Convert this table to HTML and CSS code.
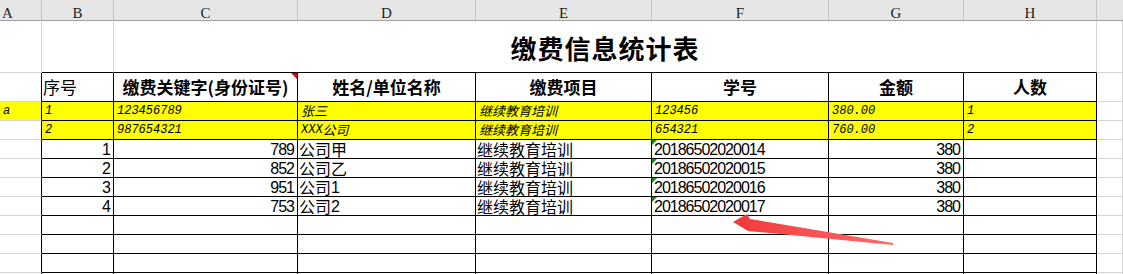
FILE: index.html
```html
<!DOCTYPE html>
<html lang="zh-CN">
<head>
<meta charset="utf-8">
<title>缴费信息统计表</title>
<link rel="stylesheet" href="styles.css">
</head>
<body>
<div class="sheet">
  <!-- column headers -->
  <div class="ch cha">A</div>
  <div class="ch">B</div>
  <div class="ch">C</div>
  <div class="ch">D</div>
  <div class="ch">E</div>
  <div class="ch">F</div>
  <div class="ch">G</div>
  <div class="ch">H</div>
  <div class="ch chi"></div>

  <!-- title row -->
  <div></div>
  <div class="kb"></div>
  <div class="title">缴费信息统计表</div>
  <div></div>

  <!-- header row -->
  <div class="edge"></div>
  <div class="t hd plain">序号</div>
  <div class="t hd ctr comment">缴费关键字(身份证号)</div>
  <div class="t hd ctr">姓名/单位名称</div>
  <div class="t hd ctr">缴费项目</div>
  <div class="t hd ctr">学号</div>
  <div class="t hd ctr">金额</div>
  <div class="t hd ctr">人数</div>
  <div></div>

  <!-- yellow rows -->
  <div class="edge ylw yt">a</div>
  <div class="t ylw yt">1</div>
  <div class="t ylw yt">123456789</div>
  <div class="t ylw yt"><span class="cj">张三</span></div>
  <div class="t ylw yt"><span class="cj">继续教育培训</span></div>
  <div class="t ylw yt">123456</div>
  <div class="t ylw yt">380.00</div>
  <div class="t ylw yt">1</div>
  <div></div>

  <div class="edge"></div>
  <div class="t ylw yt">2</div>
  <div class="t ylw yt">987654321</div>
  <div class="t ylw yt">XXX<span class="cj">公司</span></div>
  <div class="t ylw yt"><span class="cj">继续教育培训</span></div>
  <div class="t ylw yt">654321</div>
  <div class="t ylw yt">760.00</div>
  <div class="t ylw yt">2</div>
  <div></div>

  <!-- data rows -->
  <div class="edge"></div>
  <div class="t num r">1</div>
  <div class="t num r">789</div>
  <div class="t dt">公司甲</div>
  <div class="t dt">继续教育培训</div>
  <div class="t num txt">20186502020014</div>
  <div class="t num r">380</div>
  <div class="t"></div>
  <div></div>

  <div class="edge"></div>
  <div class="t num r">2</div>
  <div class="t num r">852</div>
  <div class="t dt">公司乙</div>
  <div class="t dt">继续教育培训</div>
  <div class="t num txt">20186502020015</div>
  <div class="t num r">380</div>
  <div class="t"></div>
  <div></div>

  <div class="edge"></div>
  <div class="t num r">3</div>
  <div class="t num r">951</div>
  <div class="t dt">公司<span class="dg">1</span></div>
  <div class="t dt">继续教育培训</div>
  <div class="t num txt">20186502020016</div>
  <div class="t num r">380</div>
  <div class="t"></div>
  <div></div>

  <div class="edge"></div>
  <div class="t num r">4</div>
  <div class="t num r">753</div>
  <div class="t dt">公司<span class="dg">2</span></div>
  <div class="t dt">继续教育培训</div>
  <div class="t num txt">20186502020017</div>
  <div class="t num r">380</div>
  <div class="t"></div>
  <div></div>

  <div class="edge"></div><div class="t"></div><div class="t"></div><div class="t"></div><div class="t"></div><div class="t"></div><div class="t"></div><div class="t"></div><div></div>
  <div class="edge"></div><div class="t"></div><div class="t"></div><div class="t"></div><div class="t"></div><div class="t"></div><div class="t"></div><div class="t"></div><div></div>
  <div class="edge"></div><div class="t"></div><div class="t"></div><div class="t"></div><div class="t"></div><div class="t"></div><div class="t"></div><div class="t"></div><div></div>
  <div class="edge"></div><div class="t"></div><div class="t"></div><div class="t"></div><div class="t"></div><div class="t"></div><div class="t"></div><div class="t"></div><div></div>
</div>

<svg class="arrow" width="1123" height="274" viewBox="0 0 1123 274" aria-hidden="true">
  <defs>
    <linearGradient id="ag" x1="733" y1="222" x2="893" y2="244" gradientUnits="userSpaceOnUse">
      <stop offset="0" stop-color="#f23a3a"/>
      <stop offset="1" stop-color="#ff6a6a"/>
    </linearGradient>
  </defs>
  <polygon points="733,222 747,214 750,219 893,243 893,245 748,231" fill="url(#ag)"/>
</svg>
</body>
</html>
```
FILE: styles.css
```css
html, body {
  margin: 0;
  padding: 0;
  background: #ffffff;
  overflow: hidden;
}

body {
  width: 1123px;
  height: 274px;
  position: relative;
  font-family: "Noto Sans CJK SC", "Liberation Sans", sans-serif;
  color: #000;
}

.sheet {
  display: grid;
  grid-template-columns: 42px 72px 184px 178px 176px 177px 135px 133px 26px;
  grid-template-rows: 21px 52px 29px;
  grid-auto-rows: 19px;
  height: 274px;
  overflow: hidden;
}

.sheet > div {
  box-sizing: border-box;
  border-right: 1px solid #d4d4d4;
  border-bottom: 1px solid #d4d4d4;
  overflow: hidden;
  white-space: nowrap;
  display: flex;
  align-items: center;
  position: relative;
  line-height: 18px;
}

/* column header strip */
.sheet > .ch {
  background: #e6e6e6;
  border-right-color: #c6c6c6;
  border-bottom-color: #9e9e9e;
  justify-content: center;
  align-items: flex-start;
  padding-top: 5px;
  font-family: "Liberation Serif", serif;
  font-size: 15px;
  line-height: 16px;
  color: #1e1e1e;
}
.sheet > .cha {
  justify-content: flex-start;
  padding-left: 2px;
}
.sheet > .chi {
  border-right: none;
}

/* title row */
.sheet > .kb {
  border-bottom-color: #000;
}
.sheet > .title {
  grid-column: span 6;
  border-bottom-color: #000;
  justify-content: center;
  padding-top: 2px;
  font-size: 26px;
  line-height: 34px;
  font-weight: 700;
  letter-spacing: 1px;
}

/* table cells */
.sheet > .edge {
  border-right-color: #000;
}
.sheet > .t {
  border-right-color: #000;
  border-bottom-color: #000;
}

.sheet > .hd {
  font-size: 17px;
  line-height: 24px;
  font-weight: 700;
}
.sheet > .hd.plain {
  font-weight: 400;
  padding-left: 1px;
}
.ctr {
  justify-content: center;
}

.comment::after {
  content: "";
  position: absolute;
  top: 0;
  right: 0;
  border-top: 6px solid #e00000;
  border-left: 6px solid transparent;
}

/* yellow rows */
.sheet > .ylw {
  background: #ffff00;
}
.sheet > .yt {
  font-family: "Liberation Mono", "Noto Sans CJK SC", monospace;
  font-style: italic;
  font-size: 12px;
  line-height: 16px;
  padding-left: 3px;
}
.yt .cj {
  font-family: "Noto Sans CJK SC", sans-serif;
  font-size: 13px;
  line-height: 16px;
}

/* data rows */
.sheet > .num {
  font-family: "Liberation Sans", sans-serif;
  font-size: 16px;
  line-height: 17px;
  letter-spacing: -1px;
  padding-top: 1px;
}
.sheet > .r {
  justify-content: flex-end;
  padding-right: 3px;
}
.sheet > .txt {
  padding-left: 2px;
}
.txt::before {
  content: "";
  position: absolute;
  top: 0;
  left: 0;
  border-top: 5px solid #178a17;
  border-right: 5px solid transparent;
}
.sheet > .dt {
  font-size: 16px;
  line-height: 17px;
  padding-left: 1px;
  padding-top: 1px;
}
.dg {
  font-family: "Liberation Sans", sans-serif;
}

.arrow {
  position: absolute;
  top: 0;
  left: 0;
  pointer-events: none;
}
```
